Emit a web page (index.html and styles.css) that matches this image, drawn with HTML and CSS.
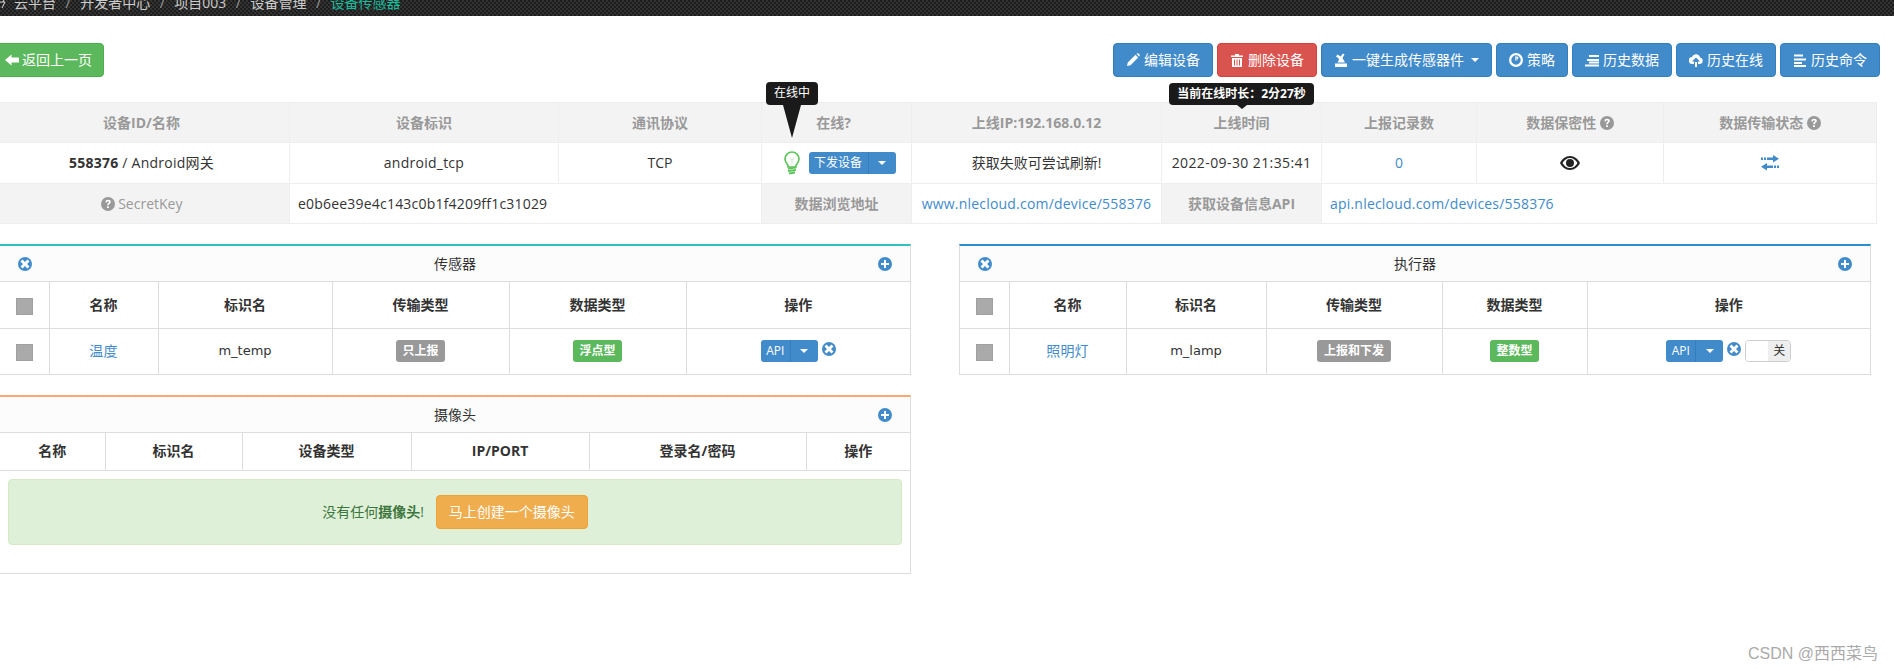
FILE: index.html
```html
<!DOCTYPE html>
<html lang="zh">
<head>
<meta charset="utf-8">
<title>设备传感器</title>
<link rel="stylesheet" href="styles.css">
</head>
<body>
<nav class="topbar">
  <svg class="crumb-mark" viewBox="0 0 7 9"><path d="M0 2H5L2 8M4 0 3 2" fill="none" stroke="#ddd" stroke-width="1"/></svg>
  <ol class="crumbs">
    <li>云平台</li><li>开发者中心</li><li>项目003</li><li>设备管理</li><li class="active">设备传感器</li>
  </ol>
</nav>
<main class="page">
  <div class="toolbar">
    <a class="btn green back"><svg class="ic" viewBox="0 0 14 14"><path d="M0 7 6.500 1.500V4.500H14V9.500H6.500V12.500Z"/></svg>返回上一页</a>
    <div class="actions">
      <a class="btn blue"><svg class="ic" viewBox="0 0 14 14"><path d="M1 13 1.800 9.500 9.500 1.800 12.200 4.500 4.500 12.200ZM10.500.8 11.300.3Q12 0 12.500.5L13.500 1.500Q14 2 13.700 2.700L13.200 3.500Z"/></svg>编辑设备</a>
      <a class="btn red"><svg class="ic" viewBox="0 0 14 14"><path d="M1 2.500H5V1H9V2.500H13V4H1ZM2 5H12V14H2ZM4 6.500V12.500H5V6.500ZM6.500 6.500V12.500H7.500V6.500ZM9 6.500V12.500H10V6.500Z" fill-rule="evenodd"/></svg>删除设备</a>
      <a class="btn blue"><svg class="ic" viewBox="0 0 14 14"><path d="M1 14V10.500H13V14ZM3.500 9.500C4.500 8 5 7 4.800 5.500L2 3.500 3.500 1.500 6.500 3.500 9 .5 10.500 1.500 8.500 5 11 9.500Z"/></svg>一键生成传感器件<i class="caret"></i></a>
      <a class="btn blue"><svg class="ic" viewBox="0 0 14 14"><path d="M7 0A7 7 0 1 0 7 14 7 7 0 1 0 7 0ZM7 2.300A4.700 4.700 0 1 1 7 11.700 4.700 4.700 0 1 1 7 2.300ZM6.300 3.200H7.700V7.500H6.300ZM8.500 3.600 9.700 4.300 8 7.200 6.800 6.500Z" fill-rule="evenodd"/></svg>策略</a>
      <a class="btn blue"><svg class="ic" viewBox="0 0 14 14"><path d="M4 2H14V4H4ZM2 6H14V8H2ZM4 8.500H14V10.500H4ZM0 11.500H14V13.500H0Z"/></svg>历史数据</a>
      <a class="btn blue"><svg class="ic" viewBox="0 0 14 14"><path d="M5 11H3.500A3.500 3.500 0 0 1 3 4 4.200 4.200 0 0 1 11 4.500 3.300 3.300 0 0 1 11 11H9V8.500H11L7 4.500 3 8.500H5ZM6 9H8V14H6Z"/></svg>历史在线</a>
      <a class="btn blue"><svg class="ic" viewBox="0 0 14 14"><path d="M1 1.500H10V3.500H1ZM1 5.500H13V7.500H1ZM1 9H9V11H1ZM1 12H13V14H1Z"/></svg>历史命令</a>
    </div>
  </div>

  <table class="info">
    <colgroup>
      <col class="c1"><col class="c2"><col class="c3"><col class="c4"><col class="c5"><col class="c6"><col class="c7"><col class="c8"><col class="c9">
    </colgroup>
    <tr class="head">
      <th>设备ID/名称</th><th>设备标识</th><th>通讯协议</th>
      <th class="anchor">
        <span class="tip tip-long"><b>在线中</b></span>
        <span class="online-head">在线?</span>
      </th>
      <th>上线IP:192.168.0.12</th>
      <th class="anchor"><span class="tip tip-short"><b>当前在线时长：2分27秒</b></span>上线时间</th>
      <th>上报记录数</th>
      <th>数据保密性 <svg class="q" viewBox="0 0 14 14"><circle cx="7" cy="7" r="7"/><path class="qm" d="M4.300 5.200Q4.500 2.800 7 2.800 9.800 2.800 9.800 5 9.800 6.200 8.400 7 7.800 7.400 7.800 8.300H6.200Q6.100 6.800 7.200 6.100 8 5.600 8 5 8 4.300 7 4.300 6 4.300 5.900 5.400ZM6.100 9.300H7.900V11H6.100Z"/></svg></th>
      <th>数据传输状态 <svg class="q" viewBox="0 0 14 14"><circle cx="7" cy="7" r="7"/><path class="qm" d="M4.300 5.200Q4.500 2.800 7 2.800 9.800 2.800 9.800 5 9.800 6.200 8.400 7 7.800 7.400 7.800 8.300H6.200Q6.100 6.800 7.200 6.100 8 5.600 8 5 8 4.300 7 4.300 6 4.300 5.900 5.400ZM6.100 9.300H7.900V11H6.100Z"/></svg></th>
    </tr>
    <tr class="mid">
      <td class="wide"><b>558376</b> / Android网关</td><td class="wide">android_tcp</td><td>TCP</td>
      <td>
        <div class="online-cell">
          <svg class="bulb" viewBox="0 0 16 24"><path d="M8 1A7 7 0 0 0 1 8C1 11 3 12.500 4 14.500V16H12V14.500C13 12.500 15 11 15 8A7 7 0 0 0 8 1Z" fill="none" stroke="#5fc65c" stroke-width="1.700"/><path d="M8 14V9M5.500 7 8 9 10.500 7" fill="none" stroke="#bfe6bd" stroke-width=".8"/><path d="M4 17.500 12 16.500M4 20 12 19M5 22.500 11 21.500" stroke="#5fc65c" stroke-width="2"/></svg>
          <span class="split xs"><span class="split-main">下发设备</span><span class="split-tog"><i class="caret"></i></span></span>
        </div>
      </td>
      <td>获取失败可尝试刷新!</td><td class="date">2022-09-30 21:35:41</td><td><a class="link">0</a></td>
      <td><svg class="eye" viewBox="0 0 20 14"><path d="M10 0C5.500 0 2 3 0 7 2 11 5.500 14 10 14S18 11 20 7C18 3 14.500 0 10 0ZM10 2C13.200 2 15.800 4 17.500 7 15.800 10 13.200 12 10 12S4.200 10 2.500 7C4.200 4 6.800 2 10 2ZM10 3A4 4 0 1 0 10 11 4 4 0 1 0 10 3Z" fill-rule="evenodd"/></svg></td>
      <td><svg class="swap" viewBox="0 0 18 16"><path d="M0 2.500H2V5H0ZM3 2.500H5V5H3ZM6 2.500H12V0L18 3.750 12 7.500V5H6ZM16 10.500H18V13H16ZM13 10.500H15V13H13ZM12 10.500V13H6V15.500L0 11.750 6 8V10.500Z"/></svg></td>
    </tr>
    <tr>
      <th class="plain"><svg class="q" viewBox="0 0 14 14"><circle cx="7" cy="7" r="7"/><path class="qm" d="M4.300 5.200Q4.500 2.800 7 2.800 9.800 2.800 9.800 5 9.800 6.200 8.400 7 7.800 7.400 7.800 8.300H6.200Q6.100 6.800 7.200 6.100 8 5.600 8 5 8 4.300 7 4.300 6 4.300 5.900 5.400ZM6.100 9.300H7.900V11H6.100Z"/></svg> SecretKey</th>
      <td colspan="2" class="left">e0b6ee39e4c143c0b1f4209ff1c31029</td>
      <th>数据浏览地址</th>
      <td><a class="link">www.nlecloud.com/device/558376</a></td>
      <th>获取设备信息API</th>
      <td colspan="3" class="left"><a class="link">api.nlecloud.com/devices/558376</a></td>
    </tr>
  </table>

  <div class="panels">
    <div class="col">
      <section class="panel teal">
        <header class="panel-head"><svg class="round" viewBox="0 0 14 14"><circle cx="7" cy="7" r="7"/><path class="qm" d="M4.500 2.500 7 5 9.500 2.500 11.500 4.500 9 7 11.500 9.500 9.500 11.500 7 9 4.500 11.500 2.500 9.500 5 7 2.500 4.500Z"/></svg><span>传感器</span><svg class="round" viewBox="0 0 14 14"><circle cx="7" cy="7" r="7"/><path class="qm" d="M6 3H8V6H11V8H8V11H6V8H3V6H6Z"/></svg></header>
        <table class="grid sensors">
          <colgroup><col class="s1"><col class="s2"><col class="s3"><col class="s4"><col class="s5"><col></colgroup>
          <tr><th><i class="check"></i></th><th>名称</th><th>标识名</th><th>传输类型</th><th>数据类型</th><th>操作</th></tr>
          <tr>
            <td><i class="check"></i></td><td><a class="link">温度</a></td><td class="mono">m_temp</td>
            <td><span class="label grey">只上报</span></td><td><span class="label ok">浮点型</span></td>
            <td><div class="ops"><span class="split xs api"><span class="split-main">API</span><span class="split-tog"><i class="caret"></i></span></span><svg class="round up" viewBox="0 0 14 14"><circle cx="7" cy="7" r="7"/><path class="qm" d="M4.500 2.500 7 5 9.500 2.500 11.500 4.500 9 7 11.500 9.500 9.500 11.500 7 9 4.500 11.500 2.500 9.500 5 7 2.500 4.500Z"/></svg></div></td>
          </tr>
        </table>
      </section>

      <section class="panel orange">
        <header class="panel-head"><span class="spacer"></span><span>摄像头</span><svg class="round" viewBox="0 0 14 14"><circle cx="7" cy="7" r="7"/><path class="qm" d="M6 3H8V6H11V8H8V11H6V8H3V6H6Z"/></svg></header>
        <table class="grid cams">
          <colgroup><col class="k1"><col class="k2"><col class="k3"><col class="k4"><col class="k5"><col></colgroup>
          <tr><th>名称</th><th>标识名</th><th>设备类型</th><th>IP/PORT</th><th>登录名/密码</th><th>操作</th></tr>
        </table>
        <div class="alert"><span>没有任何<b>摄像头</b>!</span><a class="btn amber">马上创建一个摄像头</a></div>
      </section>
    </div>

    <div class="col">
      <section class="panel sky">
        <header class="panel-head"><svg class="round" viewBox="0 0 14 14"><circle cx="7" cy="7" r="7"/><path class="qm" d="M4.500 2.500 7 5 9.500 2.500 11.500 4.500 9 7 11.500 9.500 9.500 11.500 7 9 4.500 11.500 2.500 9.500 5 7 2.500 4.500Z"/></svg><span>执行器</span><svg class="round" viewBox="0 0 14 14"><circle cx="7" cy="7" r="7"/><path class="qm" d="M6 3H8V6H11V8H8V11H6V8H3V6H6Z"/></svg></header>
        <table class="grid actors">
          <colgroup><col class="a1"><col class="a2"><col class="a3"><col class="a4"><col class="a5"><col></colgroup>
          <tr><th><i class="check"></i></th><th>名称</th><th>标识名</th><th>传输类型</th><th>数据类型</th><th>操作</th></tr>
          <tr>
            <td><i class="check"></i></td><td><a class="link">照明灯</a></td><td class="mono">m_lamp</td>
            <td><span class="label grey">上报和下发</span></td><td><span class="label ok">整数型</span></td>
            <td><div class="ops"><span class="split xs api"><span class="split-main">API</span><span class="split-tog"><i class="caret"></i></span></span><svg class="round up" viewBox="0 0 14 14"><circle cx="7" cy="7" r="7"/><path class="qm" d="M4.500 2.500 7 5 9.500 2.500 11.500 4.500 9 7 11.500 9.500 9.500 11.500 7 9 4.500 11.500 2.500 9.500 5 7 2.500 4.500Z"/></svg><span class="switch"><span class="switch-on"></span><span class="switch-off">关</span></span></div></td>
          </tr>
        </table>
      </section>
    </div>
  </div>
</main>
<div class="watermark">CSDN @西西菜鸟</div>
</body>
</html>
```
FILE: styles.css
```css
* { box-sizing: border-box; }
html, body { margin: 0; height: 671px; overflow: hidden; }
body { background: #fff; color: #333; font: 14px/20px "Open Sans", "Noto Sans CJK SC", sans-serif; position: relative; }
a { text-decoration: none; }
.topbar { display: flex; height: 16px; overflow: hidden; background-color: #222; background-image: repeating-conic-gradient(#333 0 25%, #1d1d1d 0 50%); background-size: 4px 4px; }
.crumb-mark { width: 7px; height: 9px; flex: none; }
.crumbs { display: flex; margin: -7px 0 0 7px; padding: 0; list-style: none; color: #ccc; }
.crumbs li + li::before { content: "/"; padding: 0 9.500px; color: #999; }
.crumbs .active { color: #18bc9c; }

.page { margin-left: -7px; width: 1883px; }
.toolbar { display: flex; justify-content: space-between; padding: 27px 0 25px; }
.actions { display: flex; gap: 4px; margin-right: -4px; }
.btn { display: inline-flex; align-items: center; justify-content: center; height: 34px; padding: 0 12px; border: 1px solid; border-radius: 4px; color: #fff; white-space: nowrap; }
.blue { background: #428bca; border-color: #357ebd; }
.red { background: #d9534f; border-color: #d43f3a; }
.green { background: #5cb85c; border-color: #4cae4c; }
.amber { background: #f0ad4e; border-color: #eea236; }
.back { width: 111px; }
.ic { width: 14px; height: 14px; margin-right: 4px; fill: #fff; flex: none; }
.back .ic { margin-right: 3px; }
.caret { display: inline-block; border-top: 4px solid #fff; border-left: 4px solid transparent; border-right: 4px solid transparent; }
.btn .caret { margin-left: 7px; }

.info { width: 1883px; border-collapse: collapse; table-layout: fixed; text-align: center; }
.info th, .info td { height: 40px; padding: 0; border: 1px solid #eee; font-weight: 400; }
.info .mid td { height: 41px; }
.info th { background: #f3f3f3; color: #999; font-weight: 700; }
.info th.plain { font-weight: 400; }
.info .left { text-align: left; padding-left: 8px; letter-spacing: .2px; }
.wide { letter-spacing: .25px; }
.date { letter-spacing: .4px; }
.c1 { width: 296px; } .c2 { width: 269px; } .c3 { width: 203px; } .c4 { width: 150px; } .c5 { width: 250px; } .c6 { width: 160px; } .c7 { width: 155px; } .c8 { width: 187px; } .c9 { width: 213px; }
.link { color: #428bca; letter-spacing: .2px; }
.anchor { position: relative; }
.online-head { padding-right: 6px; }
.q { display: inline-block; width: 14px; height: 14px; vertical-align: -2px; fill: #999; }
.qm { fill: #fff; }
.tip { position: absolute; background: #1a1a1a; color: #fff; font-size: 12px; line-height: 22px; border-radius: 4px; text-align: center; z-index: 2; white-space: nowrap; }
.tip b { font-weight: 400; }
.tip-long { left: 4px; top: -21px; width: 52px; height: 23px; }
.tip-long::after { content: ""; position: absolute; left: 17px; top: 23px; border-top: 33px solid #1a1a1a; border-left: 9.500px solid transparent; border-right: 9.500px solid transparent; }
.tip-short { left: 7px; top: -20px; width: 145px; height: 22px; }
.tip-short b { font-weight: 700; }
.tip-short::after { content: ""; position: absolute; left: 68px; top: 22px; border-top: 4px solid #1a1a1a; border-left: 5px solid transparent; border-right: 5px solid transparent; }
.online-cell { display: flex; align-items: center; justify-content: center; gap: 9px; padding-left: 6px; }
.bulb { width: 16px; height: 24px; flex: none; }
.split { display: inline-flex; height: 22px; border-radius: 3px; overflow: hidden; background: #428bca; color: #fff; font-size: 12px; line-height: 22px; vertical-align: top; white-space: nowrap; }
.split-main { text-align: center; border-right: 1px solid #357ebd; }
.split-tog { width: 27px; display: flex; align-items: center; justify-content: center; }
.online-cell .split { width: 87px; }
.online-cell .split-main { width: 60px; }
.api { width: 57px; }
.api .split-main { width: 30px; }
.eye { width: 20px; height: 14px; vertical-align: -2px; fill: #222; }
.swap { width: 18px; height: 16px; vertical-align: -3px; fill: #428bca; }

.panels { display: grid; grid-template-columns: 912px 912px; column-gap: 48px; margin: 20px 0 0 6px; }
.panel { border: 1px solid #ddd; border-top-width: 2px; background: #fff; margin-bottom: 20px; }
.teal { border-top-color: #2cc4bc; }
.orange { border-top-color: #ffa770; min-height: 179px; }
.sky { border-top-color: #2b8fcf; }
.panel-head { display: flex; align-items: center; justify-content: space-between; height: 36px; padding: 0 18px; background: #fcfcfc; border-bottom: 1px solid #ddd; }
.spacer { width: 14px; }
.round { width: 14px; height: 14px; fill: #428bca; flex: none; }
.grid { width: 100%; border-collapse: collapse; table-layout: fixed; text-align: center; }
.grid th, .grid td { padding: 0; border: 1px solid #ddd; height: 46px; }
.grid tr > :first-child { border-left: 0; }
.grid tr > :last-child { border-right: 0; }
.grid tr:first-child > * { border-top: 0; }
.grid tr:last-child > * { border-bottom: 0; }
.grid th { font-weight: 700; }
.mono { font-family: "DejaVu Sans", sans-serif; font-size: 13px; }
.s1 { width: 49px; } .s2 { width: 109px; } .s3 { width: 174px; } .s4 { width: 177px; } .s5 { width: 177px; }
.a1 { width: 49px; } .a2 { width: 117px; } .a3 { width: 140px; } .a4 { width: 176px; } .a5 { width: 145px; }
.k1 { width: 105px; } .k2 { width: 137px; } .k3 { width: 169px; } .k4 { width: 178px; } .k5 { width: 217px; }
.cams th { height: 37px; }
.cams tr:last-child > * { border-bottom: 1px solid #ddd; }
.check { display: inline-block; width: 17px; height: 17px; background: #aaa; border: 1px solid #a0a0a0; vertical-align: middle; }
.label { display: inline-block; height: 22px; padding: 0 6.500px; border-radius: 3px; color: #fff; font-size: 12px; font-weight: 700; line-height: 22px; vertical-align: middle; }
.grey { background: #999; }
.ok { background: #5cb85c; }
.ops { display: flex; align-items: flex-start; justify-content: center; gap: 4px; }
.up { margin-top: 2px; }
.switch { display: flex; width: 46px; height: 22px; border: 1px solid #ccc; border-radius: 4px; overflow: hidden; font-size: 12px; line-height: 20px; }
.switch-on { flex: 1; background: #fff; }
.switch-off { width: 22px; background: #eee; }
.alert { display: flex; align-items: center; justify-content: center; gap: 12px; height: 66px; margin: 8px 8px 0; background: #dff0d8; border: 1px solid #d6e9c6; border-radius: 4px; color: #3c763d; }
.watermark { position: absolute; right: 16px; top: 644px; color: #aaa; font: 16px/20px "Liberation Sans", "Noto Sans CJK SC", sans-serif; }
```
